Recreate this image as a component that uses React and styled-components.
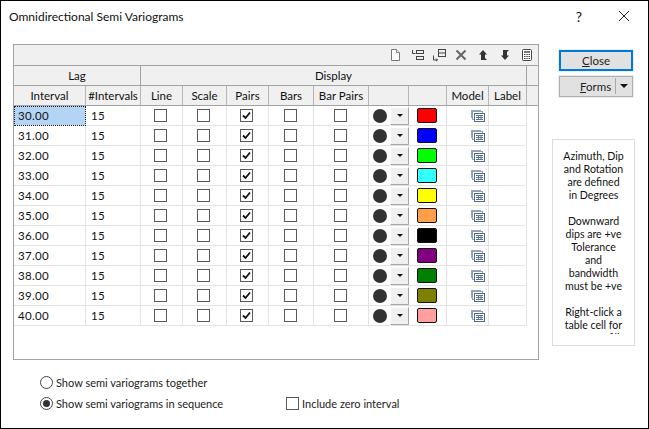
import React from "react";
import styled, { createGlobalStyle } from "styled-components";

const Global = createGlobalStyle`
  html, body { margin: 0; padding: 0; background: #fff; }
  body { font-family: "Lato", "Noto Sans", "Liberation Sans", sans-serif; font-size: 11.5px; color: #111; }
  * { box-sizing: border-box; }
`;

const COLUMNS = "72px 55px 42px 44px 42px 45px 55px 40px 38px 42px 38px 11px";

const Win = styled.div`
  width: 649px; height: 429px; background: #fff; border: 1px solid #000;
  display: flex; flex-direction: column; overflow: hidden;
`;
const TitleBar = styled.div`
  height: 30px; display: flex; align-items: center; padding: 0 18px 0 8px; flex: none;
`;
const Title = styled.div`
  flex: 1; font-size: 12px; color: #111; padding-right: 0;
`;
const Help = styled.div`
  width: 12px; font-size: 14px; text-align: center; margin-right: 33px; color: #111;
`;
const Body = styled.div`
  display: flex; padding: 13px 14px 0 12px; height: 315px; flex: none;
`;
const GridBox = styled.div`
  width: 526px; height: 316px; border: 1px solid #a3a3a3; background: #fff; flex: none;
`;
const Toolbar = styled.div`
  height: 21px; background: #f0f0f0; border-bottom: 1px solid #a3a3a3;
  display: flex; align-items: center; justify-content: flex-end; padding-right: 4px; gap: 8px;
`;
const ToolIcon = styled.svg`
  width: 14px; height: 14px; flex: none; display: block;
`;
const Row = styled.div`
  display: grid; grid-template-columns: ${COLUMNS}; height: 20px;
`;
const GroupRow = styled.div`
  display: grid; grid-template-columns: 127px 386px 11px; height: 20px; background: #f0f0f0;
  border-bottom: 1px solid #a3a3a3;
`;
const Group = styled.div`
  display: flex; align-items: center; justify-content: center;
  border-right: ${p => (p.$last ? "0" : "1px solid #a3a3a3")};
`;
const HeadRow = styled(Row)`
  background: #f0f0f0; border-bottom: 1px solid #a3a3a3;
`;
const Head = styled.div`
  display: flex; align-items: center; justify-content: center; white-space: nowrap; overflow: hidden;
  border-right: ${p => (p.$last ? "0" : "1px solid #b5b5b5")};
`;
const Cell = styled.div`
  display: flex; align-items: center; justify-content: ${p => p.$align || "center"};
  padding-left: ${p => p.$pl || 0}px; border-bottom: 1px solid #e3e3e3;
  border-right: ${p => (p.$last ? "0" : "1px solid #e3e3e3")};
  background: #fff; letter-spacing: 0.03em;
`;
const SelectedCell = styled(Cell)`
  background: #b3d4f5; outline: 1px dotted #222; outline-offset: -1px; padding-left: 4px;
`;
const Check = styled.span`
  width: 13px; height: 13px; border: 1px solid #5a5a5a; background: #fff; flex: none;
  display: flex; align-items: center; justify-content: center;
`;
const GridCheck = styled(Check)`
  margin-right: 2px;
`;
const Dot = styled.span`
  width: 14px; height: 14px; border-radius: 50%; background: #333; flex: none;
`;
const DropBtn = styled.span`
  width: 19px; height: 18px; margin-left: 3px; background: #f0f0f0; flex: none;
  border-right: 1px solid #a8a8a8; border-bottom: 1px solid #a8a8a8;
  border-top: 1px solid #fff; border-left: 1px solid #fff;
  display: flex; align-items: center; justify-content: center;
`;
const Caret = styled.span`
  width: 0; height: 0; border-left: 3px solid transparent; border-right: 3px solid transparent;
  border-top: 3px solid #111; flex: none;
`;
const BigCaret = styled(Caret)`
  border-left-width: 4px; border-right-width: 4px; border-top-width: 4px;
`;
const Swatch = styled.span`
  width: 20px; height: 15px; border: 1px solid #111; border-radius: 2px; background: ${p => p.$c}; margin-right: 2px;
`;
const Side = styled.div`
  flex: 1; display: flex; flex-direction: column; align-items: flex-start; padding-left: 20px; padding-top: 6px;
`;
const Button = styled.div`
  width: 74px; height: 22px; background: #e1e1e1; border: ${p => (p.$primary ? "2px solid #0078d7" : "1px solid #adadad")};
  outline: 1px solid ${p => (p.$primary ? "#e6f0fa" : "#eee")};
  display: flex; align-items: center; justify-content: center; color: #222;
`;
const SplitButton = styled(Button)`
  margin-top: 5px; justify-content: flex-start; padding-left: 20px;
`;
const SplitLabel = styled.span`
  width: 35px; flex: none;
`;
const SplitDiv = styled.span`
  width: 1px; height: 16px; background: #a8a8a8; margin-right: 4px; flex: none;
`;
const U = styled.span`
  text-decoration: underline;
`;
const Note = styled.div`
  margin-top: 42px; margin-left: -7px; width: 83px; height: 220px; border: 1px solid #dcdcdc; padding-top: 10px;
`;
const NoteText = styled.div`
  height: 184px; overflow: hidden; text-align: center; line-height: 13px; font-size: 10.6px; white-space: pre-line;
`;
const Options = styled.div`
  display: grid; grid-template-columns: 246px auto; grid-auto-rows: 21px; padding: 0 0 0 39px; flex: none; margin-top: 26px; font-size: 11px;
`;
const Option = styled.label`
  display: flex; align-items: center; gap: 3px; white-space: nowrap; color: #222;
`;
const Radio = styled.span`
  width: 13px; height: 13px; border-radius: 50%; border: 1px solid #444; background: #fff;
  display: flex; align-items: center; justify-content: center; flex: none;
`;
const RadioDot = styled.span`
  width: 7px; height: 7px; border-radius: 50%; background: #333;
`;

const CheckMark = () => (
  <svg width="11" height="11" viewBox="0 0 11 11">
    <path d="M2 5.500 L4.500 8 L9 2.500" fill="none" stroke="#111" strokeWidth="1.8" />
  </svg>
);

const ModelIcon = () => (
  <svg width="14" height="12" viewBox="0 0 14 12">
    <rect x="0.5" y="0.5" width="9" height="7" fill="#fff" stroke="#9aa8ba" />
    <rect x="1.5" y="1.500" width="10" height="8" fill="#fff" stroke="#8fa0b5" />
    <rect x="3.5" y="3.5" width="10" height="8" fill="#fff" stroke="#4e6b8c" />
    <path d="M5 5.500h7M5 7.500h7M5 9.500h7M7.500 5v5M10 5v5" stroke="#5d7896" strokeWidth="1" />
  </svg>
);

const tool = { fill: "none", stroke: "#444", strokeWidth: 1 };
const Tools = () => (
  <Toolbar>
    <ToolIcon viewBox="0 0 14 14">
      <path d="M3.500 1.500h5l3 3v8h-8z" fill="#fff" stroke="#777" />
      <path d="M8.500 1.500v3h3" fill="#eee" stroke="#888" />
    </ToolIcon>
    <ToolIcon viewBox="0 0 14 14">
      <path d="M2.500 2v3.500h3" {...tool} />
      <rect x="6.500" y="2.500" width="7" height="3" {...tool} />
      <rect x="6.500" y="8.500" width="7" height="3" {...tool} />
    </ToolIcon>
    <ToolIcon viewBox="0 0 14 14">
      <path d="M1.500 7.500v4.500h4M4 10.500l1.500 1.500-1.500 1" {...tool} />
      <rect x="6.500" y="1.500" width="7" height="7" {...tool} />
      <path d="M6.500 5h7" {...tool} />
    </ToolIcon>
    <ToolIcon viewBox="0 0 14 14">
      <path d="M2.500 2.500l9 9M11.500 2.500l-9 9" fill="none" stroke="#666" strokeWidth="2" />
    </ToolIcon>
    <ToolIcon viewBox="0 0 14 14">
      <path d="M7 2 L11 6.500 H9 V10 L11 12 H5 V6.500 H3 Z" fill="#333" />
    </ToolIcon>
    <ToolIcon viewBox="0 0 14 14">
      <path d="M7 12 L11 7.500 H9 V4 L11 2 H5 V7.500 H3 Z" fill="#333" />
    </ToolIcon>
    <ToolIcon viewBox="0 0 14 14">
      <rect x="2.500" y="1.500" width="9" height="11" rx="1" fill="#fff" stroke="#444" />
      <rect x="4" y="3" width="6" height="2" fill="#777" />
      <path d="M4 6.500h1.500M6.300 6.500h1.500M8.500 6.500h1.500M4 8.500h1.500M6.300 8.500h1.500M8.500 8.500h1.500M4 10.500h1.500M6.300 10.500h1.500M8.500 10.500h1.500" stroke="#444" />
    </ToolIcon>
  </Toolbar>
);

const colors = ["#ff0000","#0000ff","#00ff00","#33ffff","#ffff00","#ff9f4a","#000000","#800080","#008000","#808000","#ff9f9f"];
const rows = colors.map((c, i) => ({ interval: (30 + i).toFixed(2), color: c }));

const NOTE = `Azimuth, Dip
and Rotation
are defined
in Degrees

Downward
dips are  +ve
Tolerance
and
bandwidth
must be  +ve

Right-click a
table cell for
menu of fill`;

export default function App() {
  return (
    <>
      <Global />
      <Win>
        <TitleBar>
          <Title>Omnidirectional Semi Variograms</Title>
          <Help>?</Help>
          <svg width="12" height="12" viewBox="0 0 12 12">
            <path d="M1 1l10 10M11 1L1 11" stroke="#222" strokeWidth="1" fill="none" />
          </svg>
        </TitleBar>
        <Body>
          <GridBox>
            <Tools />
            <GroupRow>
              <Group>Lag</Group>
              <Group>Display</Group>
              <Group $last />
            </GroupRow>
            <HeadRow>
              {["Interval", "#Intervals", "Line", "Scale", "Pairs", "Bars", "Bar Pairs", "", "", "Model", "Label"].map((h, i) => (
                <Head key={i}>{h}</Head>
              ))}
              <Head $last />
            </HeadRow>
            {rows.map((r, i) => (
              <Row key={r.interval}>
                {i === 0 ? (
                  <SelectedCell $align="flex-start">{r.interval}</SelectedCell>
                ) : (
                  <Cell $align="flex-start" $pl={4}>{r.interval}</Cell>
                )}
                <Cell $align="flex-start" $pl={5}>15</Cell>
                {[0, 1, 2, 3, 4].map(k => (
                  <Cell key={k}>
                    <GridCheck>{k === 2 && <CheckMark />}</GridCheck>
                  </Cell>
                ))}
                <Cell $align="flex-start" $pl={4}>
                  <Dot />
                  <DropBtn><Caret /></DropBtn>
                </Cell>
                <Cell><Swatch $c={r.color} /></Cell>
                <Cell $align="flex-start" $pl={24}><ModelIcon /></Cell>
                <Cell />
              </Row>
            ))}
          </GridBox>
          <Side>
            <Button $primary><span><U>C</U>lose</span></Button>
            <SplitButton>
              <SplitLabel><U>F</U>orms</SplitLabel>
              <SplitDiv />
              <BigCaret />
            </SplitButton>
            <Note><NoteText>{NOTE}</NoteText></Note>
          </Side>
        </Body>
        <Options>
          <Option><Radio /><span>Show semi variograms together</span></Option>
          <span />
          <Option><Radio><RadioDot /></Radio><span>Show semi variograms in sequence</span></Option>
          <Option><Check /><span>Include zero interval</span></Option>
        </Options>
      </Win>
    </>
  );
}
